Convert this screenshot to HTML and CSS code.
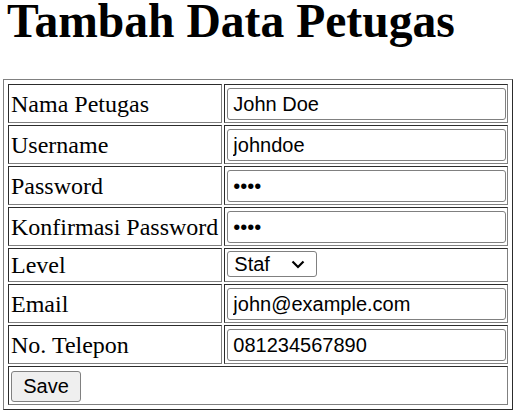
FILE: index.html
```html
<!DOCTYPE html>
<html lang="id">
<head>
<meta charset="utf-8">
<title>Tambah Data Petugas</title>
<link rel="stylesheet" href="styles.css">
</head>
<body>
<h1 class="title">Tambah Data Petugas</h1>
<form class="form">
<table class="form-table">
<tr><td class="label">Nama Petugas</td><td class="field"><input class="text" type="text" value="John Doe"></td></tr>
<tr><td class="label">Username</td><td class="field"><input class="text" type="text" value="johndoe"></td></tr>
<tr><td class="label">Password</td><td class="field"><input class="text" type="password" value="pass"></td></tr>
<tr><td class="label">Konfirmasi Password</td><td class="field"><input class="text" type="password" value="pass"></td></tr>
<tr><td class="label">Level</td><td class="field"><select class="select"><option>Admin</option><option selected>Staf</option></select></td></tr>
<tr><td class="label">Email</td><td class="field"><input class="text" type="email" value="john@example.com"></td></tr>
<tr><td class="label">No. Telepon</td><td class="field"><input class="text" type="text" value="081234567890"></td></tr>
<tr><td class="actions" colspan="2"><button class="btn" type="button">Save</button></td></tr>
</table>
</form>
</body>
</html>
```

FILE: styles.css
```css
html, body {
  margin: 0;
  padding: 0;
  background: #fff;
}
body {
  font-family: "Liberation Serif", "Times New Roman", serif;
  color: #000;
}
.title {
  font-size: 47.6px;
  font-weight: bold;
  margin: 0 0 37px 7px;
  line-height: 42px;
}
.form {
  margin: 0 5px 0 3px;
}
.form-table {
  width: 100%;
  border: 1px outset gray;
  border-spacing: 2px;
  padding: 2px;
}
.label, .field, .actions {
  border: 1px inset gray;
  padding: 2px 1px 2px 2px;
  font-size: 24px;
  line-height: 28px;
}
.label {
  width: 1%;
  white-space: nowrap;
  padding-right: 3px;
}
.text {
  font-family: "Liberation Sans", Arial, sans-serif;
  font-size: 20px;
  color: #000;
  width: 100%;
  box-sizing: border-box;
  height: 32px;
  padding: 0 5px;
  margin: 1px 0 0;
  display: block;
  border: 1px solid #808080;
  border-radius: 3px;
  background: #fff;
  outline: none;
}
.select {
  -webkit-appearance: none;
  appearance: none;
  font-family: "Liberation Sans", Arial, sans-serif;
  font-size: 20px;
  line-height: 24px;
  color: #000;
  width: 90px;
  height: 26px;
  margin: 0;
  padding: 0 0 0 6px;
  border: 1px solid #808080;
  border-radius: 3px;
  background: #fff url("data:image/svg+xml,%3Csvg xmlns='http://www.w3.org/2000/svg' width='14' height='9' viewBox='0 0 14 9'%3E%3Cpath d='M1.5 1.5 L7 7 L12.5 1.5' fill='none' stroke='%23000' stroke-width='2.2'/%3E%3C/svg%3E") no-repeat right 11px center;
  vertical-align: top;
}
.btn {
  font-family: "Liberation Sans", Arial, sans-serif;
  font-size: 20px;
  color: #000;
  width: 70px;
  height: 31px;
  padding: 0;
  margin: 2px 0 0;
  display: block;
  border: 1px solid #808080;
  border-radius: 3px;
  background: #efefef;
}
```
